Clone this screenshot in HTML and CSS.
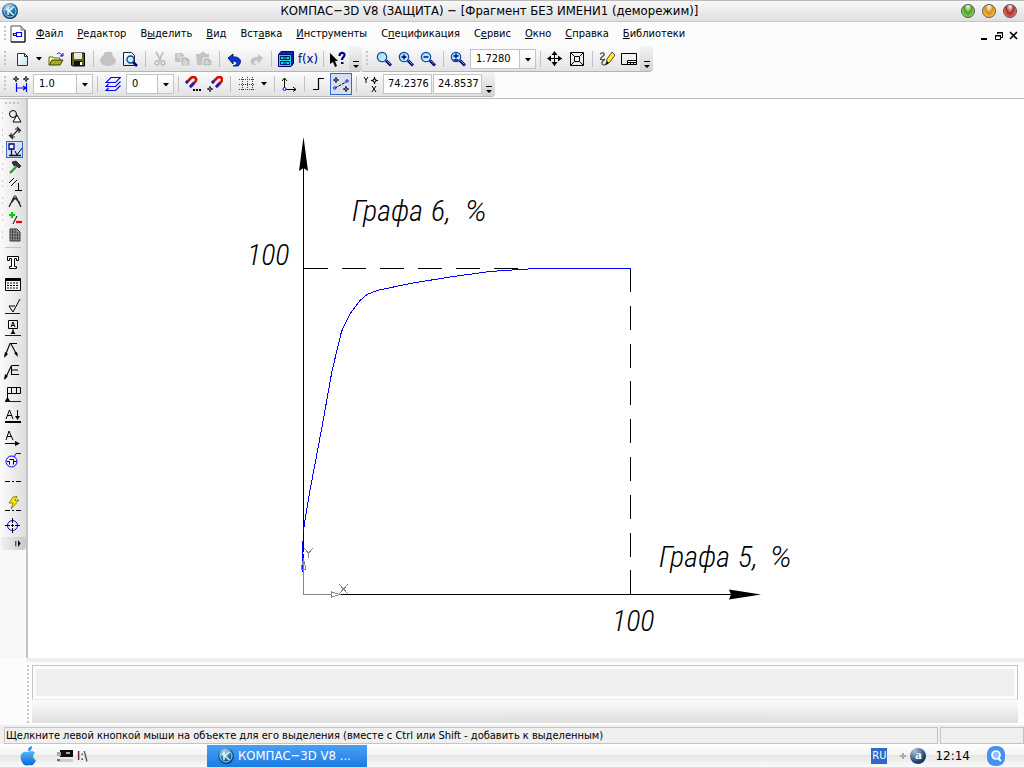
FILE: index.html
```html
<!DOCTYPE html>
<html lang="ru">
<head>
<meta charset="utf-8">
<title>КОМПАС-3D V8</title>
<link rel="stylesheet" href="styles.css">
</head>
<body>
<svg class="defs" aria-hidden="true">
  <defs>
    <radialGradient id="orb" cx="40%" cy="25%" r="85%"><stop offset="0" stop-color="#b9d6ea"/><stop offset=".5" stop-color="#1873ae"/><stop offset="1" stop-color="#04284a"/></radialGradient>
    <linearGradient id="lens" x1="0" y1="0" x2="1" y2="1"><stop offset="0" stop-color="#8fd0ff"/><stop offset="1" stop-color="#e2f6ff"/></linearGradient>
    <linearGradient id="apple" x1="0" y1="0" x2="0" y2="1"><stop offset="0" stop-color="#55b7f5"/><stop offset="1" stop-color="#0769d8"/></linearGradient>
    <linearGradient id="sheet" x1="0" y1="0" x2="1" y2="1"><stop offset="0" stop-color="#fff"/><stop offset="1" stop-color="#c4e2ea"/></linearGradient>
  </defs>
  <symbol id="logo" viewBox="0 0 16 16"><circle cx="8" cy="8" r="8" fill="url(#orb)"/><circle cx="8" cy="8" r="6" fill="none" stroke="#a9d0e8" stroke-width="1"/><path d="M6 4v8M11.500 4 7 8l4.500 4M6 5 3.500 7" fill="none" stroke="#e8f5fc" stroke-width="1.500"/></symbol>
  <symbol id="mag" viewBox="0 0 16 16"><path d="m10 9.500 5 5" stroke="#00007b" stroke-width="3"/><path d="m10.500 9.500 4 4" stroke="#5c9ad4" stroke-width="1"/><circle cx="6" cy="6" r="4.700" fill="url(#lens)" stroke="#0b4ba0" stroke-width="1.200"/></symbol>
  <symbol id="caret" viewBox="0 0 6 4"><path d="M0 0h6L3 3.500z"/></symbol>
  <symbol id="more" viewBox="0 0 8 8"><path d="M1 0h6v1H1zM1 4h6L4 7z"/></symbol>
  <symbol id="node" viewBox="0 0 6 6"><path d="M3 0v6M0 3h6" stroke="#000" stroke-width="1"/><circle cx="3" cy="3" r="1.300" fill="#fff" stroke="#000"/></symbol>
</svg>

<header class="titlebar">
  <svg class="app-logo"><use href="#logo"/></svg>
  <h1 class="title">КОМПАС−3D V8 (ЗАЩИТА) − [Фрагмент БЕЗ ИМЕНИ1 (деморежим)]</h1>
  <div class="lights">
    <button class="light green" aria-label="Свернуть"></button>
    <button class="light amber" aria-label="Развернуть"></button>
    <button class="light red" aria-label="Закрыть"></button>
  </div>
</header>

<nav class="menubar">
  <span class="grip"></span>
  <svg class="doc-icon" viewBox="0 0 16 18"><path d="M1 1h10l4 4v12H1z" fill="#fff" stroke="#555"/><path d="M15 5v12H1" fill="none" stroke="#000"/><path d="M11 1v4h4" fill="#ccc" stroke="#777"/><path d="M6.500 7.500h5v4h-5zM6 8.500H3.500v2H6" fill="none" stroke="#00f" stroke-width="1.200"/></svg>
  <button class="menu-item"><u>Ф</u>айл</button>
  <button class="menu-item"><u>Р</u>едактор</button>
  <button class="menu-item">В<u>ы</u>делить</button>
  <button class="menu-item"><u>В</u>ид</button>
  <button class="menu-item">Вст<u>а</u>вка</button>
  <button class="menu-item"><u>И</u>нструменты</button>
  <button class="menu-item">С<u>п</u>ецификация</button>
  <button class="menu-item">С<u>е</u>рвис</button>
  <button class="menu-item"><u>О</u>кно</button>
  <button class="menu-item"><u>С</u>правка</button>
  <button class="menu-item"><u>Б</u>иблиотеки</button>
  <div class="mdi">
    <button class="mdi-button" aria-label="Свернуть документ"><svg viewBox="0 0 10 10"><path d="M2 7h6v2H2z"/></svg></button>
    <button class="mdi-button" aria-label="Восстановить документ"><svg viewBox="0 0 10 10"><path d="M3.500 3V1.500h5v5H7M3 2h6" fill="none" stroke="#000"/><path d="M1.500 4.500h5v4h-5zM1 5h6" fill="none" stroke="#000"/></svg></button>
    <button class="mdi-button" aria-label="Закрыть документ"><svg viewBox="0 0 10 10"><path d="m1 1 7 7M8 1 1 8" stroke="#000" stroke-width="1.700"/></svg></button>
  </div>
</nav>

<div class="toolrow first">
  <div class="toolbar">
    <span class="grip"></span>
    <button class="tool" aria-label="Создать"><svg viewBox="0 0 16 16"><path d="M3.500 2.500h7l3 3v9h-10z" fill="url(#sheet)" stroke="#333"/><path d="M10.500 2.500v3h3" fill="none" stroke="#333"/></svg></button>
    <button class="drop" aria-label="Варианты создания"><svg><use href="#caret"/></svg></button>
    <button class="tool" aria-label="Открыть"><svg viewBox="0 0 16 16"><path d="M1 14V6h4l1 1h6v2" fill="#ffffa5" stroke="#6b6b00"/><path d="m1 14 3-5h11l-3 5z" fill="#a8a832" stroke="#3c3c00"/><path d="M9 3c2-2 4-1 5 2M15 2v3h-3" fill="none" stroke="#00f"/></svg></button>
    <button class="tool" aria-label="Сохранить"><svg viewBox="0 0 16 16"><path d="M1.500 2h13v13h-12l-1-1z" fill="#636300" stroke="#000"/><path d="M4 2h8v6H4z" fill="#e8e8e8"/><path d="M4 10h8v5H4z" fill="#111"/><path d="M10 11h2v3h-2z" fill="#fff"/></svg></button>
    <span class="sep"></span>
    <button class="tool" aria-label="Печать" disabled><svg viewBox="0 0 16 16"><path d="M0 9c1-3 2-4 3-4l2-4h7l1 5c3 1 4 5 1 7-4 3-13 3-14-4z" fill="#c3c3c3"/></svg></button>
    <button class="tool" aria-label="Просмотр"><svg viewBox="0 0 16 16"><path d="M1.500 1.500h8l3 3v10h-11z" fill="url(#sheet)" stroke="#222"/><path d="m11 11 4 4" stroke="#00007b" stroke-width="2.500"/><circle cx="8.500" cy="8.500" r="3.500" fill="#c9efff" stroke="#0b4ba0" stroke-width="1.400"/></svg></button>
    <span class="sep"></span>
    <button class="tool" aria-label="Вырезать" disabled><svg viewBox="0 0 16 16"><path d="m4 1 5 9M11 1l-4 9" stroke="#bbb" stroke-width="1.600"/><path d="M5 10a2 2 0 1 0 .1 0zM11 10a2 2 0 1 0 .1 0z" fill="none" stroke="#bbb" stroke-width="1.500"/></svg></button>
    <button class="tool" aria-label="Копировать" disabled><svg viewBox="0 0 16 16"><path d="M1 2h7l2 2v7H1z" fill="#c3c3c3"/><path d="M7 6h6l3 3v6H7z" fill="#bbb" stroke="#eee"/><path d="M3 4h3M3 6h3M9 9h3M9 11h5M9 13h5" stroke="#eee"/></svg></button>
    <button class="tool" aria-label="Вставить" disabled><svg viewBox="0 0 16 16"><path d="M0 3h4l2-2h2l2 2h3v11H1z" fill="#c3c3c3"/><path d="M7 7h6l3 3v5H7z" fill="#bbb" stroke="#eee"/><path d="M9 10h3M9 12h5" stroke="#eee"/></svg></button>
    <span class="sep"></span>
    <button class="tool" aria-label="Отменить"><svg viewBox="0 0 16 16"><path d="M2 7 7 3v3c7-1 10 5 5 9H7c5-1 5-5 0-5v3z" fill="#003bd0" stroke="#00006b" stroke-width=".8"/></svg></button>
    <button class="tool" aria-label="Повторить" disabled><svg viewBox="0 0 16 16"><path d="M15 7 10 3v3C3 5 0 11 5 14h4c-4-1-4-5 1-4v3z" fill="#c3c3c3"/></svg></button>
    <span class="sep"></span>
    <button class="tool" aria-label="Менеджер библиотек"><svg viewBox="0 0 16 16"><path d="M.5 3.500 3 .5h12.500v12l-2.500 3H.5z" fill="#1520c0" stroke="#000080"/><path d="M1 4h12v11H1z" fill="#19dce5"/><path d="M2.500 5.500h9v3h-9zM2.500 10.500h9v3h-9zM5 7h4M5 12h4M1 3.500h12.500V15" fill="none" stroke="#001a60"/></svg></button>
    <button class="tool fx">f(x)</button>
    <span class="sep"></span>
    <button class="tool" aria-label="Справка"><svg viewBox="0 0 16 16"><path d="M0 2v11l3-2 2 5 2-1-2-5h3z"/><path d="M9.500 5c0-4 5-4 5-1 0 2-2.500 2-2.500 5" fill="none" stroke="#000080" stroke-width="2.200"/><path d="M11 11h2.500v2H11z" fill="#000080"/></svg></button>
    <button class="more" aria-label="Ещё"><svg><use href="#more"/></svg></button>
  </div>
  <div class="toolbar">
    <span class="grip"></span>
    <button class="tool" aria-label="Увеличить рамкой"><svg><use href="#mag"/></svg></button>
    <button class="tool" aria-label="Увеличить"><svg viewBox="0 0 16 16"><use href="#mag"/><path d="M3.500 6h5M6 3.500v5" stroke="#00007b" stroke-width="1.400"/></svg></button>
    <button class="tool" aria-label="Уменьшить"><svg viewBox="0 0 16 16"><use href="#mag"/><path d="M3.500 6h5" stroke="#00007b" stroke-width="1.400"/></svg></button>
    <span class="sep"></span>
    <button class="tool" aria-label="Масштаб"><svg viewBox="0 0 16 16"><use href="#mag"/><path d="M3.500 5h5M6 2.500v5M3.500 9h5" stroke="#00007b" stroke-width="1.300"/></svg></button>
    <span class="combo zoom"><select aria-label="Текущий масштаб"><option>1.7280</option></select><svg class="arrow"><use href="#caret"/></svg></span>
    <span class="sep"></span>
    <button class="tool" aria-label="Сдвинуть"><svg viewBox="0 0 16 16"><path d="M7.500 1v14M1 7.500h14" stroke="#000"/><path d="m7.500 0 3 4h-6zM7.500 15l3-4h-6zM0 7.500l4-3v6zM15 7.500l-4-3v6z"/></svg></button>
    <button class="tool" aria-label="Показать все"><svg viewBox="0 0 16 16"><path d="M1.500 1.500h13v13h-13zM5.500 5.500h5v5h-5zM2 2l3 3M14 2l-3 3M2 14l3-3M14 14l-3-3" fill="none" stroke="#000"/></svg></button>
    <span class="sep"></span>
    <button class="tool" aria-label="Обновить"><svg viewBox="0 0 16 16"><path d="M1 3c4-3 6 0 2 3s1 3 3 2c-5 4-3 6-1 6s3-2 4-2" fill="none" stroke="#444" stroke-width="1.200"/><path d="m7 13 1-5 5-7 3 3-5 7z" fill="#ffef32" stroke="#332b00" stroke-width=".8"/><path d="m7 14 1-4 2 2z"/></svg></button>
    <button class="tool" aria-label="Панель"><svg viewBox="0 0 16 16"><path d="M.5 2.500h15v11H.5z" fill="none" stroke="#000"/><path d="M6.500 9.500h9v4h-9zM9.500 11v3M12.500 11v3M7 11.500h9" fill="none" stroke="#000"/></svg></button>
    <button class="more" aria-label="Ещё"><svg><use href="#more"/></svg></button>
  </div>
</div>

<div class="toolrow second">
  <div class="toolbar">
    <span class="grip"></span>
    <button class="tool" aria-label="Шаг курсора"><svg viewBox="0 0 16 16"><use href="#node" width="6" height="6" x="0" y="0"/><use href="#node" width="6" height="6" x="10" y="0"/><path d="M3.500 7v9M13.500 7v9M4 12h9M10 10l3 2-3 2" fill="none" stroke="#00f" stroke-width="1.200"/></svg></button>
    <span class="combo step"><select aria-label="Шаг"><option>1.0</option></select><svg class="arrow"><use href="#caret"/></svg></span>
    <span class="sep"></span>
    <button class="tool wide" aria-label="Слои"><svg viewBox="0 0 16 16"><path d="M6 1.500h9.500l-5 5H1zM3.500 8 1 10.500h9.500l5-5M3.500 12 1 14.500h9.500l5-5" fill="none" stroke="#00f" stroke-width="1.100"/></svg></button>
    <span class="combo layer"><select aria-label="Слой"><option>0</option></select><svg class="arrow"><use href="#caret"/></svg></span>
    <span class="sep"></span>
    <button class="tool" aria-label="Привязки"><svg viewBox="0 0 16 16"><path d="m1 7 5-5c3-3 7 1 4 4l-5 5" fill="none" stroke="#d01000" stroke-width="2.600"/><path d="m1 7 2-2M5 11l4-4" stroke="#12c" stroke-width="2.800"/><path d="M8 13h2v2H8zM11 13h2v2h-2zM14 13h2v2h-2z"/></svg></button>
    <button class="tool" aria-label="Запретить привязки"><svg viewBox="0 0 16 16"><path d="m5 7 5-5c3-3 7 1 4 4l-5 5" fill="none" stroke="#d81000" stroke-width="2.600"/><path d="m5 7 2-2M9 11l4-4" stroke="#12c" stroke-width="2.800"/><use href="#node" x="0" y="10" width="6" height="6"/></svg></button>
    <span class="sep"></span>
    <button class="tool grid-tool" aria-label="Сетка"><svg viewBox="0 0 16 16"><path d="M3.500 1v14M8.500 1v14M13.500 1v14M0 3.500h16M0 8.500h16M0 13.500h16" stroke="#444" stroke-dasharray="1 1"/></svg></button>
    <button class="drop" aria-label="Настройка сетки"><svg><use href="#caret"/></svg></button>
    <span class="sep"></span>
    <button class="tool" aria-label="Система координат"><svg viewBox="0 0 16 16"><path d="M3.500 12V2M5 13.500h10M1 5l2.500-3L6 5M12 11l3 2.500-3 2" fill="none" stroke="#000"/><circle cx="3.500" cy="13" r="1.500" fill="#fff" stroke="#00f"/></svg></button>
    <span class="sep"></span>
    <button class="tool" aria-label="Ортогональное черчение"><svg viewBox="0 0 16 16"><path d="M2 13.500h5.500v-11H13" fill="none" stroke="#000" stroke-width="1.200"/></svg></button>
    <button class="tool active" aria-label="Округление" aria-pressed="true"><svg viewBox="0 0 16 16"><use href="#node" x="0" y="1" width="6" height="6"/><use href="#node" x="10" y="10" width="6" height="6"/><path d="m2 12 11-6" stroke="#000" stroke-dasharray="3 1"/><circle cx="1.800" cy="12" r="1.200" fill="#fff" stroke="#00f"/><circle cx="14" cy="5" r="1.200" fill="#fff" stroke="#00f"/></svg></button>
    <span class="sep"></span>
    <span class="tool"><svg viewBox="0 0 16 16"><path d="m1 1 2 3 2-3M3 4v3M9 10l4 6M13 10l-4 6" fill="none" stroke="#000"/><use href="#node" x="8" y="1" width="7" height="7"/></svg></span>
    <input class="coord" aria-label="Координата X" value="74.2376">
    <input class="coord" aria-label="Координата Y" value="24.8537">
    <button class="more" aria-label="Ещё"><svg><use href="#more"/></svg></button>
  </div>
</div>

<main class="work">
  <aside class="side">
    <span class="side-grip"></span>
    <div class="modes">
      <button class="mode" aria-label="Геометрия"><svg viewBox="0 0 14 14"><circle cx="5" cy="5" r="3.500" fill="none" stroke="#000"/><path d="m9 6 4 7H5z" fill="#fff" stroke="#000"/></svg></button>
      <button class="mode" aria-label="Размеры"><svg viewBox="0 0 14 14"><path d="m3 11 8-8M1 9l4 4M9 1l4 4M3 7v4h4M7 3h4v4" fill="none" stroke="#222" stroke-width="1.100"/></svg></button>
      <button class="mode active" aria-label="Обозначения"><svg viewBox="0 0 14 14"><path d="M1 1h5v5H1zM3.500 6v6M1 12.500h12" fill="#fff" stroke="#00007b" stroke-width="1.300"/><path d="m7 8 2 4 5-7" fill="none" stroke="#000"/></svg></button>
      <button class="mode" aria-label="Редактирование"><svg viewBox="0 0 14 14"><path d="m2 13 7-7" stroke="#2aa02a" stroke-width="2.400"/><path d="m4 2 4-1 5 5-2 2-3-3-2 1z" fill="#334" stroke="#000" stroke-width=".6"/></svg></button>
      <button class="mode" aria-label="Параметризация"><svg viewBox="0 0 14 14"><path d="m1 6 5-5M3 9l6-6M10.500 6v7M7 13.500h7" stroke="#000"/></svg></button>
      <button class="mode" aria-label="Измерения"><svg viewBox="0 0 14 14"><path d="m1 13 5-10h2l5 10M3 9l4-5 5 5" fill="none" stroke="#222" stroke-width="1.300"/><circle cx="7" cy="2.500" r="1.500" fill="#777"/></svg></button>
      <button class="mode" aria-label="Выделение"><svg viewBox="0 0 14 14"><path d="M1 4h6M4 1v6" stroke="#00d000" stroke-width="2.200"/><path d="m9 5-4 8" stroke="#000"/><path d="M8 11h6" stroke="#f00000" stroke-width="2.200"/></svg></button>
      <button class="mode" aria-label="Спецификация"><svg viewBox="0 0 14 14"><path d="M2 1h7l3 3v9H2z" fill="#999" stroke="#333"/><path d="M4.500 1v12M7 1v12M9.500 4v9M2 4h7M2 7h10M2 10h10" stroke="#333" stroke-width=".7"/></svg></button>
    </div>
    <div class="marks">
      <button class="mark" aria-label="Ввод текста"><svg viewBox="0 0 16 16"><path d="M2.500 2.500h11v4h-2v-2h-2v8h2v2h-7v-2h2v-8h-2v2h-2z" fill="#fff" stroke="#000"/></svg></button>
      <button class="mark" aria-label="Ввод таблицы"><svg viewBox="0 0 16 16"><path d="M.5 2.500h15v12H.5z" fill="#fff" stroke="#000"/><path d="M1 3.500h14" stroke="#000" stroke-width="3"/><path d="M2 7h12M2 9.500h12M2 12h12" stroke="#000" stroke-dasharray="2 1"/></svg></button>
      <button class="mark" aria-label="Шероховатость"><svg viewBox="0 0 16 16"><path d="m4 8 4 6 7-13M4 8h6" fill="none" stroke="#000"/><path d="M0 15.500h15" stroke="#00f"/></svg></button>
      <button class="mark" aria-label="База"><svg viewBox="0 0 16 16"><path d="M3.500.5h9v8h-9zM8 9v4M6 7l2-5 2 5M7 5.500h2" fill="none" stroke="#000"/><path d="m5.500 14 2.500-4 2.500 4z"/><path d="M0 15.500h16" stroke="#00f"/></svg></button>
      <button class="mark" aria-label="Линия-выноска"><svg viewBox="0 0 16 16"><path d="m0 14 5-12.500h7M6 2l6 11" fill="none" stroke="#000" stroke-width="1.100"/><path d="m-1 16 1-6 3 2zM13 15l-4-4 3-1z"/></svg></button>
      <button class="mark" aria-label="Клеймение"><svg viewBox="0 0 16 16"><path d="M0 15 6.500 1.500v9H14M7 1.500h7M7 6h6" fill="none" stroke="#000" stroke-width="1.100"/><path d="m-1 16 1-6 3 2z"/></svg></button>
      <button class="mark" aria-label="Допуск формы"><svg viewBox="0 0 16 16"><path d="M2.500 1.500h13v6h-13zM6.500 2v5M11.500 2v5M2.500 7v7" fill="none" stroke="#000"/><path d="m0 15 2.500-4L5 15z"/><path d="M0 15.500h16" stroke="#00f"/></svg></button>
      <button class="mark" aria-label="Стрелка взгляда"><svg viewBox="0 0 16 16"><path d="m1 11 3.500-9L8 11M2 7.500h5M12.500 2v8" fill="none" stroke="#000"/><path d="m10 8 2.500 4L15 8zM0 13h16v2H0z"/></svg></button>
      <button class="mark" aria-label="Линия разреза"><svg viewBox="0 0 16 16"><path d="m1 10 3-9 4 9M2 6.500h5M0 13.500h13" fill="none" stroke="#000"/><path d="m10 11 5 2.500-5 2.500z"/></svg></button>
      <button class="mark" aria-label="Выносной элемент"><svg viewBox="0 0 16 16"><circle cx="6.500" cy="9.500" r="5.500" fill="none" stroke="#00f"/><path d="m9 5 2-3.500h5" fill="none" stroke="#00f"/><path d="M2 9.500h2.500v3M4.500 7.500h4v5M8.500 9.500h3" fill="none" stroke="#000"/></svg></button>
      <button class="mark" aria-label="Осевая линия"><svg viewBox="0 0 16 16"><path d="M0 7.500h16" stroke="#000" stroke-dasharray="5 2 2 2"/></svg></button>
      <button class="mark" aria-label="Автоосевая"><svg viewBox="0 0 16 16"><path d="m8 1 4-.5-2 4 4-.5-8 9 2-6H4z" fill="#ffe800" stroke="#776a00" stroke-width=".8"/><path d="M0 14.500h16" stroke="#000" stroke-dasharray="5 2 2 2"/></svg></button>
      <button class="mark" aria-label="Обозначение центра"><svg viewBox="0 0 16 16"><circle cx="7.500" cy="7.500" r="5" fill="none" stroke="#00f"/><path d="M7.500 0v5M7.500 10v5M0 7.500h5M10 7.500h5M7.500 6v3M6 7.500h3" stroke="#000"/></svg></button>
    </div>
    <button class="side-more" aria-label="Ещё"><svg viewBox="0 0 8 8"><path d="M1 1h1v6H1zM4 0l3 4-3 4z"/></svg></button>
  </aside>
  <svg class="drawing" viewBox="28 99 996 558" preserveAspectRatio="xMinYMin meet" role="img" aria-label="График">
    <g fill="none" shape-rendering="crispEdges">
      <path d="M303.500 140v412M340 594.500h392" stroke="#000"/>
      <path d="M304 268.500h327" stroke="#000" stroke-dasharray="24 14"/>
      <path d="M630.500 268v327" stroke="#000" stroke-dasharray="24 13.800"/>
      <path d="M303.500 571v-17M302.500 572v-31M303.500 531 305 520 309.500 493 322 427 332 371 341.500 331.500 350 314 359.500 301 367 294.500 377 290.500 410 283.500 450 277 490 271.500 520 269.500 536 268.500H631" stroke="#00f"/>
      <path d="M303.500 561v33.500H331" stroke="#888"/>
      <path d="M331.500 592v5l8-2.500zM301.500 569.500v-3l2-7 2 7v3z" stroke="#888"/>
      <path d="m304 548 4.500 5 4.500-5M308.500 553v5M339 584l9 10M348 584l-9 10" stroke="#888"/>
    </g>
    <path d="M303.500 137 308 171l-4.500-3-4.500 3zM761 594.500l-32 5 2-5-2-5z"/>
    <g class="labels">
      <text x="352" y="221">Графа</text><text x="431" y="221">6,</text><text class="percent" x="465" y="221">%</text>
      <text x="247" y="265">100</text>
      <text x="659" y="567">Графа</text><text x="738" y="567">5,</text><text class="percent" x="770" y="567">%</text>
      <text x="612" y="631">100</text>
    </g>
  </svg>
</main>

<section class="properties">
  <span class="panel-grip"></span>
  <div class="panel">
    <div class="panel-body"></div>
    <div class="panel-tabs"></div>
  </div>
</section>

<footer class="status">
  <p class="status-text">Щелкните левой кнопкой мыши на объекте для его выделения (вместе с Ctrl или Shift - добавить к выделенным)</p>
  <span class="status-cell"></span>
</footer>

<div class="taskbar">
  <button class="start" aria-label="Пуск"><svg viewBox="0 0 16 20"><path d="M8 6c2-1 5-2 7 1-3 2-2 6 1 7-2 5-4 6-7 5-3 1-5 1-7-3C-1 11 1 4 8 6z" fill="url(#apple)"/><path d="M8 5c0-3 1-4 4-5 0 3-1 5-4 5z" fill="#2e93e8"/></svg></button>
  <button class="drive"><svg viewBox="0 0 16 14"><path d="M3 1h13v7H3z" fill="#111"/><path d="M0 3h4v4H0z" fill="#aaa"/><path d="M9 3h4v2H9z" fill="#aaa"/><path d="M0 10h16v3H0z" fill="#ccd"/><path d="M0 10h3v2H0z" fill="#388"/></svg>I:\</button>
  <button class="task"><svg><use href="#logo"/></svg>КОМПАС−3D V8 ...</button>
  <div class="tray">
    <span class="lang">RU</span>
    <svg class="plus" viewBox="0 0 6 6"><path d="M3 0v6M0 3h6" stroke="#aaa" stroke-width="2"/></svg>
    <span class="avast">a</span>
    <time class="clock">12:14</time>
    <button class="search" aria-label="Поиск"><svg viewBox="0 0 18 20"><rect width="18" height="20" rx="8" fill="#4690f4"/><circle cx="9" cy="9" r="4" fill="#8cc0ff" stroke="#fff" stroke-width="1.700"/><path d="m11 12 3 3" stroke="#fff" stroke-width="2"/></svg></button>
  </div>
</div>
</body>
</html>
```
FILE: styles.css
```css
* { box-sizing: border-box; }
body {
  margin: 0;
  height: 100vh;
  display: flex;
  flex-direction: column;
  overflow: hidden;
  background: #fcfcfc;
  color: #000;
  font: 11px/14px "DejaVu Sans Condensed", "DejaVu Sans", sans-serif;
}
button, input, select { margin: 0; padding: 0; border: 0; background: none; color: inherit; font: inherit; }
button { display: flex; align-items: center; justify-content: center; flex: none; }
svg { display: block; flex: none; }
.defs { position: absolute; width: 0; height: 0; }

.titlebar {
  flex: none;
  display: flex;
  align-items: center;
  height: 22px;
  padding: 0 7px 0 2px;
  border-top: 1px solid #b8b8b8;
  border-bottom: 1px solid #c6c6c6;
  background: linear-gradient(#f8f8f8, #dfdfdf);
}
.app-logo { width: 16px; height: 16px; }
.title { flex: 1; margin: 0; text-align: center; font: 13px/20px "DejaVu Sans Condensed", "DejaVu Sans", sans-serif; white-space: nowrap; }
.lights { display: flex; gap: 7px; }
.light { width: 14px; height: 14px; border: 1px solid #555; border-radius: 50%; }
.green { background: radial-gradient(ellipse at 50% 10%, #fff, #4ba31c 45%, #b9f77f); }
.amber { background: radial-gradient(ellipse at 50% 10%, #fff, #dc8b16 45%, #fff36b); }
.red { background: radial-gradient(ellipse at 50% 10%, #fff, #b52a24 45%, #f5a59c); }

.grip {
  flex: none;
  width: 10px;
  height: 16px;
  background: repeating-linear-gradient(#c4c4c4 0 2px, transparent 2px 4px) 4px 0 / 2px 100% no-repeat;
}
.menubar { flex: none; display: flex; align-items: center; height: 24px; background: #fcfcfc; }
.doc-icon { width: 16px; height: 18px; margin-right: 3px; }
.menu-item { height: 20px; padding: 0 7px; }
.mdi { display: flex; gap: 5px; margin-left: auto; padding: 4px 5px 0 0; }
.mdi-button svg { width: 10px; height: 10px; }

.toolrow { flex: none; display: flex; height: 26px; }
.first .grip { width: 11px; }
.second { height: 27px; padding-bottom: 1px; border-bottom: 1px solid #bbb; }
.toolbar {
  display: flex;
  align-items: center;
  border-bottom: 1px solid #b4b4b4;
  border-radius: 0 4px 4px 0;
  background: linear-gradient(#fcfcfc, #e2e2e2);
}
.tool { display: flex; align-items: center; justify-content: center; flex: none; width: 22px; height: 22px; }
.tool svg { width: 16px; height: 16px; }
.wide { width: 24px; }
.grid-tool { margin-left: 2px; }
.active { border: 1px solid #316ac5; background: #d5dff0; }
.fx { color: #000080; font: 13px/18px "DejaVu Sans Condensed", "DejaVu Sans", sans-serif; }
.drop { width: 12px; height: 22px; }
.drop svg, .arrow { width: 6px; height: 4px; }
.sep { flex: none; width: 8px; height: 16px; background: linear-gradient(#c2c2c2, #c2c2c2) 4px 0 / 1px 100% no-repeat; }
.more { align-self: stretch; align-items: flex-end; width: 13px; padding-bottom: 2px; border-radius: 0 4px 4px 0; background: linear-gradient(#f4f4f4, #d2d2d2); }
.more svg { width: 8px; height: 8px; }
.combo { position: relative; flex: none; height: 20px; margin-left: 1px; border: 1px solid #c4c4c4; background: #fff; }
.combo select { width: 100%; height: 18px; padding-left: 5px; appearance: none; }
.combo::after { content: ""; position: absolute; top: 0; right: 0; width: 15px; height: 18px; border-left: 1px solid #c4c4c4; background: linear-gradient(#fff, #eee); pointer-events: none; }
.arrow { position: absolute; top: 8px; right: 4px; z-index: 1; pointer-events: none; }
.zoom { width: 66px; }
.step { width: 60px; }
.layer { width: 48px; }
.coord { width: 49px; height: 20px; margin-left: 1px; padding: 0 0 1px 4px; border: 1px solid #c4c4c4; background: #fff; }

.work { flex: 1; display: flex; min-height: 0; }
.side { flex: none; width: 28px; padding-left: 1px; border-right: 2px solid #c4c4c4; background: #f8f8f8; }
.side-grip { display: block; height: 8px; background: repeating-linear-gradient(90deg, #c4c4c4 0 2px, transparent 2px 4px) 4px 3px / 16px 2px no-repeat, linear-gradient(90deg, #fafafa, #dedede); }
.modes { padding: 0 2px 4px 5px; background: repeating-linear-gradient(#c8c8c8 0 2px, transparent 2px 5px, #c8c8c8 5px 7px, transparent 7px 17px) 1px 5px / 1px 134px no-repeat, linear-gradient(90deg, #fafafa, #dedede); }
.mode { width: 17px; height: 17px; }
.mode svg { width: 14px; height: 14px; }
.marks { padding: 4px 2px 0 3px; background: linear-gradient(#c4c4c4, #c4c4c4) 4px 0 / 16px 1px no-repeat, linear-gradient(90deg, #fafafa, #dedede); }
.mark { width: 18px; height: 22px; }
.mark svg { width: 16px; height: 16px; overflow: visible; }
.side-more { justify-content: flex-end; width: 25px; height: 13px; padding-right: 4px; border-radius: 0 0 4px 4px; background: linear-gradient(90deg, #f0f0f0, #c8c8c8); }
.side-more svg { width: 8px; height: 7px; }
.drawing { flex: 1; min-width: 0; height: 100%; background: #fff; }
.labels { font: italic 300 30px "Roboto Condensed", Roboto, sans-serif; }
.percent { font-family: Roboto, sans-serif; }

.properties { flex: none; display: flex; gap: 3px; margin-left: 26px; padding: 3px 6px 2px 1px; border-top: 4px solid #eee; background: #fcfcfc; }
.panel-grip { width: 2px; background: repeating-linear-gradient(#c4c4c4 0 2px, transparent 2px 4px); }
.panel { flex: 1; }
.panel-body { height: 35px; padding: 3px; border: 1px solid #c4c4c4; border-bottom-color: #ececec; background: #efefef content-box; }
.panel-tabs { height: 23px; background: linear-gradient(#fcfcfc, #dedede); }

.status { flex: none; display: flex; gap: 2px; padding: 2px 0 0 4px; background: #efefef; }
.status-text { flex: 1; height: 17px; margin: 0; padding: 1px; border: 1px solid #c4c4c4; white-space: nowrap; overflow: hidden; }
.status-cell { width: 84px; border: 1px solid #c4c4c4; }

.taskbar { flex: none; display: flex; align-items: center; height: 24px; padding: 0 20px; border-bottom: 1px solid #ddd; background: linear-gradient(#fff, #f4f4f4 45%, #e6e6e6 50%, #fafafa); font-size: 12px; }
.start svg { width: 16px; height: 20px; }
.drive { width: 150px; gap: 4px; margin-left: 21px; justify-content: flex-start; }
.drive svg { width: 16px; height: 14px; }
.task { width: 160px; height: 22px; gap: 4px; justify-content: flex-start; padding-left: 11px; background: linear-gradient(#4aa0f2, #1c7be4); color: #fff; font-size: 13px; }
.task svg { width: 16px; height: 16px; }
.tray { display: flex; align-items: center; margin-left: auto; margin-right: -1px; }
.lang { width: 16px; height: 16px; background: #316ac5; color: #fff; font-size: 11px; line-height: 16px; text-align: center; }
.plus { width: 6px; height: 6px; margin: 0 4px 0 13px; }
.avast { width: 16px; height: 16px; border-radius: 50%; background: radial-gradient(circle at 30% 20%, #a9bfd4, #123a6b 70%); color: #fff; font: bold 13px/14px "Liberation Serif", serif; text-align: center; }
.clock { margin: 0 17px 0 9px; font-family: "DejaVu Sans", sans-serif; }
.search svg { width: 18px; height: 20px; }
```
